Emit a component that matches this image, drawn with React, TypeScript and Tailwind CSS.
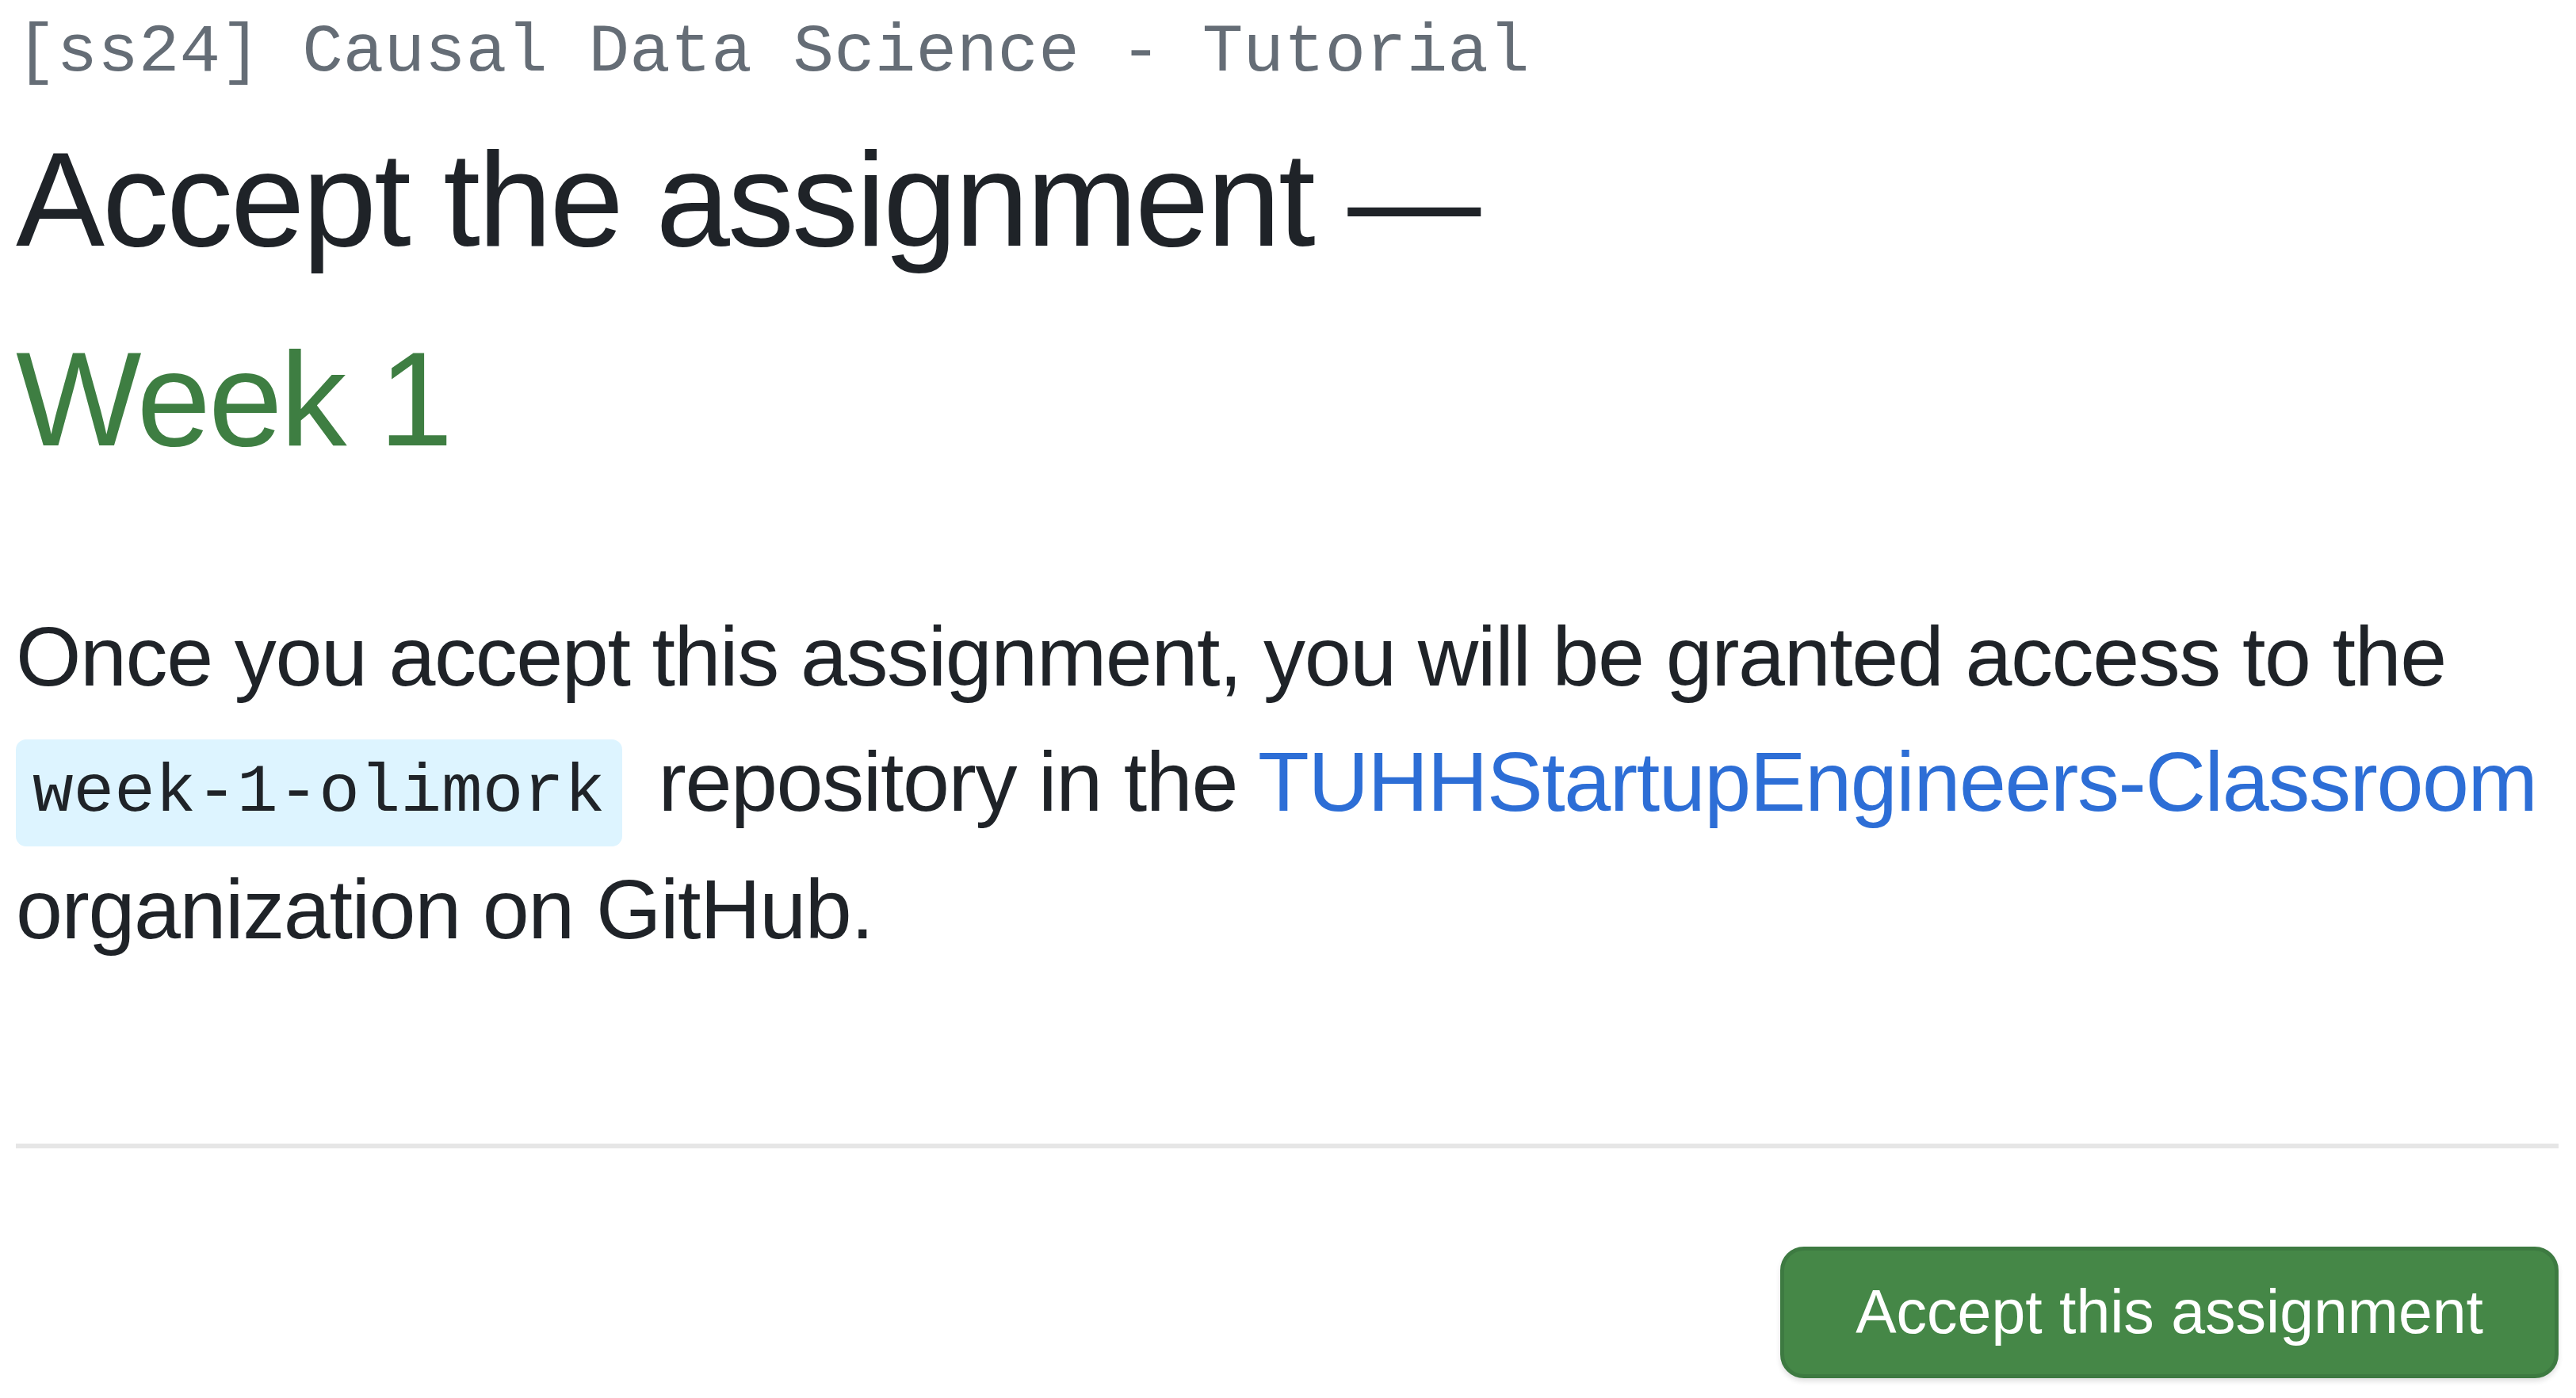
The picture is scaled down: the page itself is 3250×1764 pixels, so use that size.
export default function App() {
  return (
    <div className="min-h-screen bg-white pl-[20px] pr-[22px] font-['Liberation_Sans',Arial,sans-serif] text-[#1f2328]">
      <div className="whitespace-nowrap pt-[6px] font-['Liberation_Mono',monospace] text-[86px] leading-[120px] text-[#656d76]">
        [ss24] Causal Data Science - Tutorial
      </div>

      <h1 className="whitespace-nowrap text-[168px] font-normal leading-[252px] tracking-[-3px]">
        Accept the assignment —
        <br />
        <span className="text-[#3e7e42]">Week 1</span>
      </h1>

      <p className="mt-[119px] whitespace-nowrap text-[106px] leading-[158px] tracking-[-1.4px]">
        Once you accept this assignment, you will be granted access to the
        <br />
        <code className="mr-[18px] inline-block h-[135px] rounded-[13px] bg-[#ddf4ff] px-[21px] font-['Liberation_Mono',monospace] text-[86px] leading-[135px] tracking-normal">
          week-1-olimork
        </code>{" "}
        repository in the{" "}
        <a href="#" className="text-[#2d6ed6]">
          TUHHStartupEngineers-Classroom
        </a>
        <br />
        organization on GitHub.
      </p>

      <hr className="mt-[217px] border-0 border-t-[6px] border-[#e6e6e6]" />

      <div className="mt-[124px] flex justify-end">
        <button className="h-[166px] rounded-[30px] border-[5px] border-[#3d7a41] bg-[#458747] px-[90px] text-[77px] text-white shadow-[0_4px_6px_rgba(0,0,0,0.12)]">
          Accept this assignment
        </button>
      </div>
    </div>
  );
}
